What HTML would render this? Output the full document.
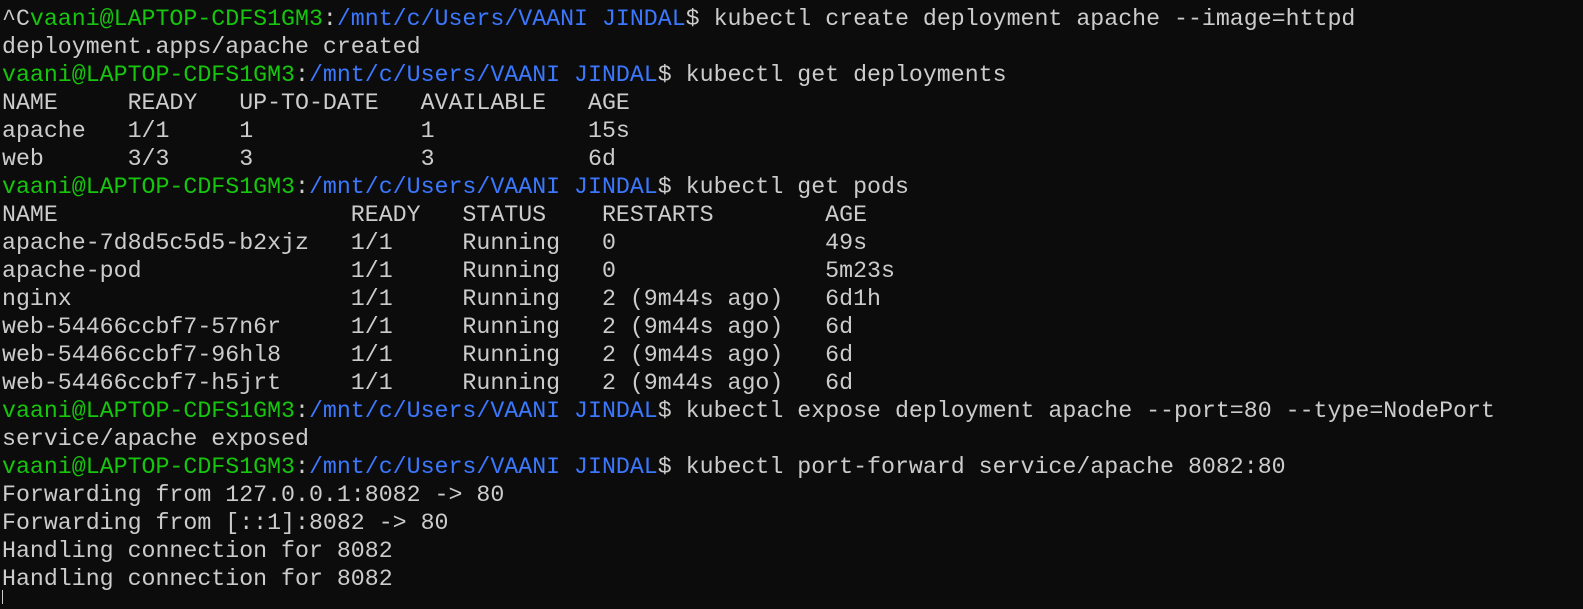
<!DOCTYPE html>
<html><head><meta charset="utf-8"><style>
html,body{margin:0;padding:0;background:#0c0c0c;width:1583px;height:609px;overflow:hidden;position:relative}
.l{position:absolute;left:2px;margin:0;font-family:"Liberation Mono",monospace;font-size:23.25px;line-height:28px;height:28px;color:#cccccc;white-space:pre}
.g{color:#16c60c}.b{color:#3b78ff}
.cur{position:absolute;left:2px;top:590px;width:1px;height:14px;background:#cccccc}
</style></head><body>
<div class="l" style="top:4.7px">^C<span class="g">vaani@LAPTOP-CDFS1GM3</span>:<span class="b">/mnt/c/Users/VAANI JINDAL</span>$ kubectl create deployment apache --image=httpd</div>
<div class="l" style="top:32.7px">deployment.apps/apache created</div>
<div class="l" style="top:60.7px"><span class="g">vaani@LAPTOP-CDFS1GM3</span>:<span class="b">/mnt/c/Users/VAANI JINDAL</span>$ kubectl get deployments</div>
<div class="l" style="top:88.7px">NAME     READY   UP-TO-DATE   AVAILABLE   AGE</div>
<div class="l" style="top:116.7px">apache   1/1     1            1           15s</div>
<div class="l" style="top:144.7px">web      3/3     3            3           6d</div>
<div class="l" style="top:172.7px"><span class="g">vaani@LAPTOP-CDFS1GM3</span>:<span class="b">/mnt/c/Users/VAANI JINDAL</span>$ kubectl get pods</div>
<div class="l" style="top:200.7px">NAME                     READY   STATUS    RESTARTS        AGE</div>
<div class="l" style="top:228.7px">apache-7d8d5c5d5-b2xjz   1/1     Running   0               49s</div>
<div class="l" style="top:256.7px">apache-pod               1/1     Running   0               5m23s</div>
<div class="l" style="top:284.7px">nginx                    1/1     Running   2 (9m44s ago)   6d1h</div>
<div class="l" style="top:312.7px">web-54466ccbf7-57n6r     1/1     Running   2 (9m44s ago)   6d</div>
<div class="l" style="top:340.7px">web-54466ccbf7-96hl8     1/1     Running   2 (9m44s ago)   6d</div>
<div class="l" style="top:368.7px">web-54466ccbf7-h5jrt     1/1     Running   2 (9m44s ago)   6d</div>
<div class="l" style="top:396.7px"><span class="g">vaani@LAPTOP-CDFS1GM3</span>:<span class="b">/mnt/c/Users/VAANI JINDAL</span>$ kubectl expose deployment apache --port=80 --type=NodePort</div>
<div class="l" style="top:424.7px">service/apache exposed</div>
<div class="l" style="top:452.7px"><span class="g">vaani@LAPTOP-CDFS1GM3</span>:<span class="b">/mnt/c/Users/VAANI JINDAL</span>$ kubectl port-forward service/apache 8082:80</div>
<div class="l" style="top:480.7px">Forwarding from 127.0.0.1:8082 -&gt; 80</div>
<div class="l" style="top:508.7px">Forwarding from [::1]:8082 -&gt; 80</div>
<div class="l" style="top:536.7px">Handling connection for 8082</div>
<div class="l" style="top:564.7px">Handling connection for 8082</div>
<div class="cur"></div>
</body></html>
